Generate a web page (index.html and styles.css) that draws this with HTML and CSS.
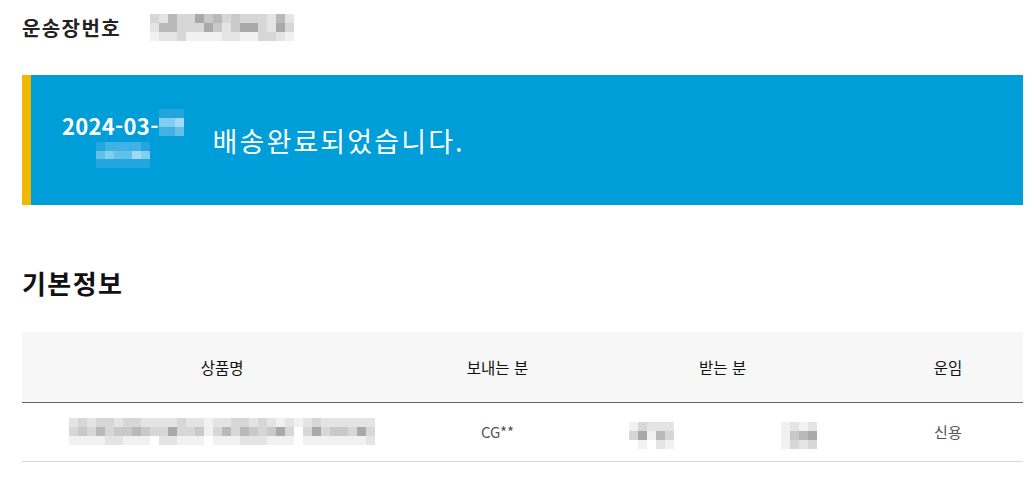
FILE: index.html
```html
<!DOCTYPE html>
<html lang="ko">
<head>
<meta charset="utf-8">
<title>배송조회</title>
<link rel="stylesheet" href="styles.css">
</head>
<body>
<div class="wrap">
  <div class="track">
    <span class="track-label">운송장번호</span>
    <div class="mosaic m-track">
      <span class="c"></span><span class="b"></span><span class="e"></span><span class="c"></span><span class="c"></span><span class="f"></span><span class="d"></span><span class="e"></span><span class="c"></span><span class="d"></span><span class="c"></span><span class="c"></span><span class="c"></span><span class="b"></span><span class="e"></span><span class="b"></span>
      <span class="b"></span><span class="e"></span><span class="e"></span><span class="c"></span><span class="c"></span><span class="c"></span><span class="f"></span><span class="d"></span><span class="b"></span><span class="d"></span><span class="f"></span><span class="f"></span><span class="c"></span><span class="b"></span><span class="f"></span><span class="c"></span>
      <span class="a"></span><span class="b"></span><span class="b"></span><span class="c"></span><span class="a"></span><span class="a"></span><span class="a"></span><span class="a"></span><span class="b"></span><span class="b"></span><span class="a"></span><span class="a"></span><span class="c"></span><span class="c"></span><span class="b"></span><span class="a"></span>
    </div>
  </div>

  <div class="banner">
    <div class="banner-date">
      <div class="date-line"><span class="date-text">2024-03-</span><span class="mosaic m-dsuf">
        <span class="p"></span><span class="p"></span><span class="p"></span>
        <span class="s"></span><span class="s"></span><span class="t"></span>
        <span class="q"></span><span class="q"></span><span class="r"></span>
      </span></div>
      <div class="date-line2"><span class="mosaic m-dtime">
        <span class="p"></span><span class="q"></span><span class="q"></span><span class="q"></span><span class="q"></span><span class="p"></span>
        <span class="r"></span><span class="s"></span><span class="r"></span><span class="r"></span><span class="t"></span><span class="s"></span>
        <span class="p"></span><span class="p"></span><span class="p"></span><span class="p"></span><span class="p"></span><span class="p"></span>
      </span></div>
    </div>
    <p class="banner-msg">배송완료되었습니다.</p>
  </div>

  <h2 class="section-title">기본정보</h2>

  <table class="info">
    <colgroup>
      <col class="col-1"><col class="col-2"><col class="col-3"><col class="col-4">
    </colgroup>
    <thead>
      <tr><th>상품명</th><th>보내는 분</th><th>받는 분</th><th>운임</th></tr>
    </thead>
    <tbody>
      <tr>
        <td><span class="mosaic m-prod">
          <span class="b"></span><span class="c"></span><span class="b"></span><span class="c"></span><span class="c"></span><span class="b"></span><span class="c"></span><span class="c"></span><span class="b"></span><span class="b"></span><span class="b"></span><span class="b"></span><span class="c"></span><span class="b"></span><span class="b"></span><span class="a"></span><span class="b"></span><span class="b"></span><span class="c"></span><span class="c"></span><span class="b"></span><span class="c"></span><span class="b"></span><span class="a"></span><span class="b"></span><span class="a"></span><span class="b"></span><span class="c"></span><span class="b"></span><span class="b"></span><span class="b"></span><span class="b"></span><span class="b"></span><span class="b"></span>
          <span class="c"></span><span class="d"></span><span class="c"></span><span class="e"></span><span class="c"></span><span class="d"></span><span class="d"></span><span class="e"></span><span class="d"></span><span class="c"></span><span class="c"></span><span class="f"></span><span class="c"></span><span class="c"></span><span class="d"></span><span class="a"></span><span class="c"></span><span class="e"></span><span class="c"></span><span class="e"></span><span class="d"></span><span class="c"></span><span class="d"></span><span class="f"></span><span class="c"></span><span class="w"></span><span class="c"></span><span class="f"></span><span class="c"></span><span class="d"></span><span class="d"></span><span class="c"></span><span class="f"></span><span class="c"></span>
          <span class="a"></span><span class="a"></span><span class="a"></span><span class="a"></span><span class="b"></span><span class="b"></span><span class="a"></span><span class="a"></span><span class="a"></span><span class="w"></span><span class="b"></span><span class="b"></span><span class="a"></span><span class="a"></span><span class="a"></span><span class="w"></span><span class="a"></span><span class="a"></span><span class="a"></span><span class="b"></span><span class="b"></span><span class="b"></span><span class="a"></span><span class="a"></span><span class="a"></span><span class="w"></span><span class="a"></span><span class="a"></span><span class="a"></span><span class="a"></span><span class="a"></span><span class="a"></span><span class="a"></span><span class="b"></span>
        </span></td>
        <td>CG**</td>
        <td><span class="receiver">
          <span class="mosaic m-recv1">
            <span class="a"></span><span class="c"></span><span class="b"></span><span class="b"></span><span class="b"></span>
            <span class="c"></span><span class="f"></span><span class="a"></span><span class="e"></span><span class="c"></span>
            <span class="w"></span><span class="a"></span><span class="w"></span><span class="b"></span><span class="a"></span>
          </span>
          <span class="mosaic m-recv2">
            <span class="a"></span><span class="b"></span><span class="a"></span><span class="b"></span>
            <span class="a"></span><span class="d"></span><span class="e"></span><span class="f"></span>
            <span class="a"></span><span class="c"></span><span class="b"></span><span class="c"></span>
          </span>
        </span></td>
        <td>신용</td>
      </tr>
    </tbody>
  </table>
</div>
</body>
</html>
```

FILE: styles.css
```css
* { box-sizing: border-box; }

html, body {
  margin: 0;
  padding: 0;
  background: #fff;
}

body {
  font-family: "Noto Sans CJK KR", "Noto Sans", sans-serif;
  color: #222;
}

.wrap {
  width: 1023px;
  padding: 0 0 0 22px;
}

/* mosaic (redacted content) */
.mosaic {
  display: inline-grid;
  vertical-align: middle;
  grid-template-rows: repeat(3, 1fr);
  flex: none;
}
.mosaic span { display: block; }
.mosaic .w { background: transparent; }
.mosaic .a { background: #f1f1f1; }
.mosaic .b { background: #e4e4e4; }
.mosaic .c { background: #d7d7d7; }
.mosaic .d { background: #c9c9c9; }
.mosaic .e { background: #b9b9b9; }
.mosaic .f { background: #a9a9a9; }
.mosaic .p { background: #22a6dd; }
.mosaic .q { background: #40b3e4; }
.mosaic .r { background: #62c1ea; }
.mosaic .s { background: #82cef0; }
.mosaic .t { background: #a0daf4; }

.m-track { width: 144px; height: 27px; grid-template-columns: repeat(16, 1fr); }
.m-dsuf { width: 25px; height: 27px; grid-template-columns: repeat(3, 1fr); }
.m-dtime { width: 54px; height: 26px; grid-template-columns: repeat(6, 1fr); }
.m-prod { width: 306px; height: 27px; grid-template-columns: repeat(34, 1fr); }
.m-recv1 { width: 45px; height: 27px; grid-template-columns: repeat(5, 1fr); }
.m-recv2 { width: 36px; height: 27px; grid-template-columns: repeat(4, 1fr); }

/* tracking number */
.track {
  display: flex;
  align-items: center;
  gap: 29px;
  height: 28px;
  margin-top: 13px;
}
.track-label {
  font-size: 20px;
  font-weight: 700;
  color: #222;
  letter-spacing: 1.4px;
}

/* banner */
.banner {
  display: flex;
  align-items: center;
  height: 130px;
  margin-top: 34px;
  width: 1001px;
  background: #009ed8;
  border-left: 9px solid #f2b700;
  padding-left: 31px;
  color: #fff;
}
.banner-date {
  display: flex;
  flex-direction: column;
  align-items: center;
  flex: none;
}
.date-line {
  display: flex;
  align-items: center;
  height: 30px;
  white-space: nowrap;
}
.date-text {
  font-size: 22px;
  font-weight: 700;
  letter-spacing: 0.3px;
}
.date-line .mosaic { margin-top: -6px; }
.date-line2 {
  display: flex;
  align-items: center;
  height: 30px;
}
.banner-msg {
  margin: 0 0 0 29px;
  font-size: 27px;
  font-weight: 400;
  letter-spacing: 2.1px;
  white-space: nowrap;
}

/* section */
.section-title {
  margin: 60px 0 0;
  height: 67px;
  font-size: 26px;
  font-weight: 700;
  line-height: 36px;
  letter-spacing: 1.4px;
  color: #111;
}

/* table */
.info {
  width: 1001px;
  border-collapse: collapse;
  table-layout: fixed;
  font-size: 15px;
}
.col-1 { width: 40%; }
.col-2 { width: 15%; }
.col-3 { width: 30%; }
.col-4 { width: 15%; }
.info th {
  height: 70px;
  background: #f7f7f7;
  font-weight: 400;
  font-size: 15.5px;
  color: #111;
  text-align: center;
  border-bottom: 1px solid #666;
}
.info td {
  height: 59px;
  text-align: center;
  color: #555;
  border-bottom: 1px solid #d9d9d9;
}
.receiver {
  display: inline-flex;
  align-items: center;
  gap: 107px;
}
```
